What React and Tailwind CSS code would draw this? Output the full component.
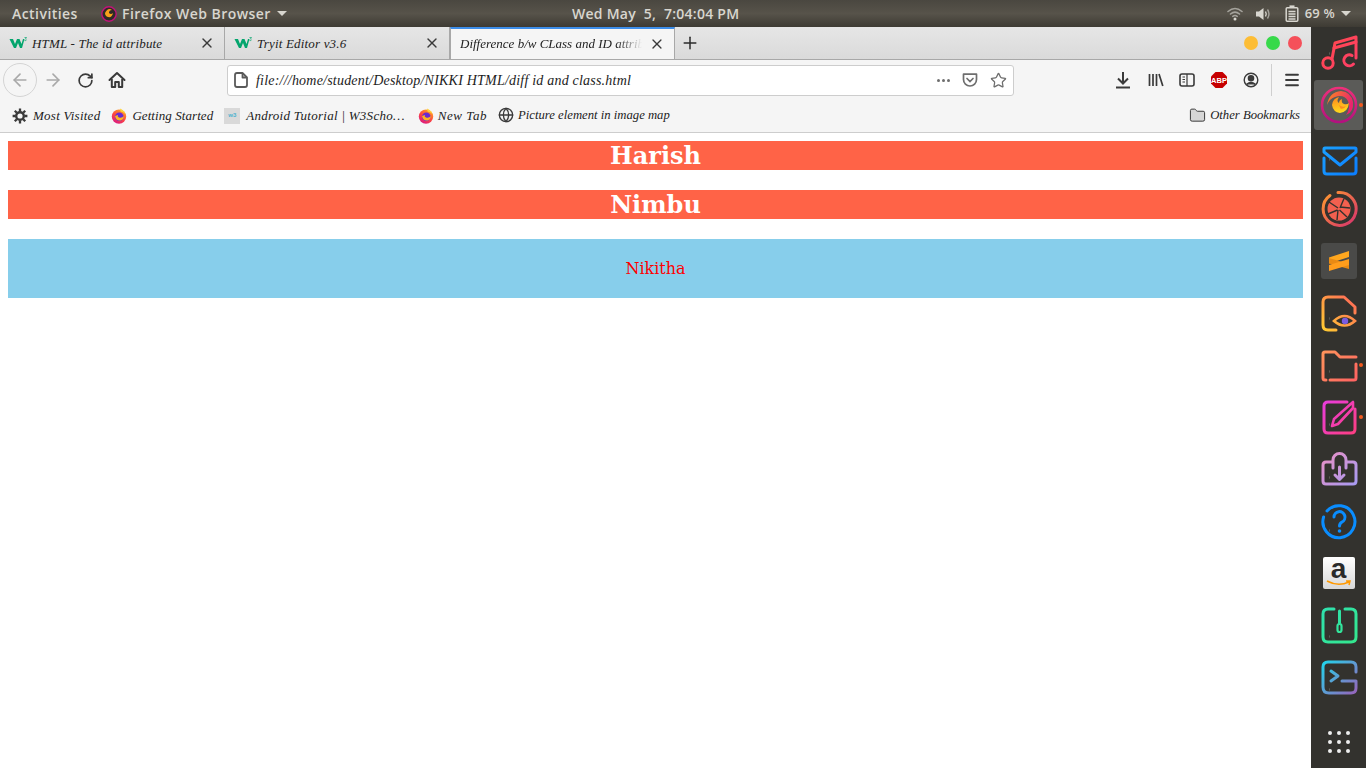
import { ArrowLeft, ArrowRight, Folder, Globe, Menu, Plus, RotateCw, Star, X } from "lucide-react";

const CHROME_FONT = "font-['Liberation_Serif',serif] italic";

function Caret() {
  return <span className="ml-[6px] h-0 w-0 border-x-[5px] border-t-[5px] border-x-transparent border-t-[#d8d6cf]" />;
}

function W3Logo() {
  return (
    <svg width="18" height="12" viewBox="0 0 18 12" className="shrink-0">
      <path d="M0.5 2 H4 L6 7 L8 2 H10.5 L12.5 7 L14 2 H15.5 L13 11 H11 L9 6 L7 11 H5 Z" fill="#04a56d" />
      <path d="M15.5 0.5 H17.5 L16.5 2 Q17.8 2.5 16.8 3.6 H15.5" fill="none" stroke="#04a56d" strokeWidth="0.7" />
    </svg>
  );
}

function FirefoxFavicon() {
  return (
    <svg width="16" height="16" viewBox="0 0 16 16" className="shrink-0">
      <defs>
        <linearGradient id="ffOuter" x1="0.8" y1="0" x2="0.2" y2="1">
          <stop offset="0" stopColor="#ffb020" />
          <stop offset="0.5" stopColor="#ff4a3d" />
          <stop offset="1" stopColor="#d6148a" />
        </linearGradient>
      </defs>
      <circle cx="8" cy="8.6" r="7.2" fill="url(#ffOuter)" />
      <circle cx="8.3" cy="8.8" r="4.3" fill="#6a2bd0" />
      <path d="M4 8 Q5 13 9.5 12.5 Q13 11.5 12.8 8 Q11 10.5 8 9.5 Q6 8.5 7 7 Z" fill="#ffb31f" />
      <path d="M9 0.5 Q13 2 14.5 6 Q12 3.5 9.5 3.5 Z" fill="#ffd53a" />
    </svg>
  );
}

function Tab({ title, active, fade, tracking }) {
  if (active) {
    return (
      <div className="flex h-full w-[225px] items-center border-x border-[#a8a8a8] border-t-2 border-t-[#3d8eea] bg-[#f5f5f5] pl-[9px] pr-[9px]">
        <span className={`w-[187px] overflow-hidden whitespace-nowrap text-[13px] text-[#222] ${CHROME_FONT} ${fade}`}>{title}</span>
        <X size={16} strokeWidth={2} className="ml-[3px] text-[#3a3a3a]" />
      </div>
    );
  }
  return (
    <div className="flex h-full w-[225px] items-center border-r border-[#a8a8a8] pl-[9px] pr-[9px]">
      <W3Logo />
      <span className={`ml-[5px] flex-1 whitespace-nowrap pt-px text-[13px] text-[#222] ${CHROME_FONT} ${tracking}`}>{title}</span>
      <X size={16} strokeWidth={2} className="text-[#3a3a3a]" />
    </div>
  );
}

function TopBar() {
  return (
    <div className="flex h-[27px] shrink-0 items-center bg-gradient-to-b from-[#4a4740] via-[#57534a] to-[#3e3b34] font-['Open_Sans',sans-serif] text-[14px] font-semibold text-[#d8d6cf]">
      <div className="flex w-[572px] items-center pl-[12px] tracking-[0.45px]">
        <span className="w-[88px]">Activities</span>
        <svg width="18" height="18" viewBox="0 0 18 18">
          <circle cx="9" cy="9" r="7.2" fill="#2e2b28" stroke="#c2127a" strokeWidth="1.4" />
          <path d="M5 8 Q8 2 12 5 Q9 5 9 8 Q11 10 13 8 Q12 13 8 12 Q5 11 5 8Z" fill="#f9a01b" />
        </svg>
        <span className="ml-[4px]">Firefox Web Browser</span>
        <Caret />
      </div>
      <span className="whitespace-pre tracking-[0.26px]">Wed May  5,  7:04:04 PM</span>
      <div className="ml-auto flex items-center pr-[15px]">
        <svg width="16" height="14" viewBox="0 0 16 14" fill="none" stroke="#a5a39c" strokeWidth="1.6" strokeLinecap="round">
          <path d="M1 4.5 Q8 -1.5 15 4.5" />
          <path d="M3.5 7 Q8 3.2 12.5 7" />
          <path d="M5.8 9.3 Q8 7.6 10.2 9.3" />
          <circle cx="8" cy="12" r="1.5" fill="#d8d6cf" stroke="none" />
        </svg>
        <svg width="16" height="14" viewBox="0 0 16 14" className="ml-[12px]" fill="none">
          <path d="M1 4.5 H4 L8.5 1 V13 L4 9.5 H1 Z" fill="#d8d6cf" />
          <path d="M10.5 4.5 Q12 7 10.5 9.5" stroke="#d8d6cf" strokeWidth="1.4" />
          <path d="M12.5 2.5 Q15.5 7 12.5 11.5" stroke="#a5a39c" strokeWidth="1.4" />
        </svg>
        <svg width="14" height="17" viewBox="0 0 14 17" className="ml-[14px]" fill="none" stroke="#d8d6cf" strokeWidth="1.5">
          <rect x="1.2" y="2.8" width="11.6" height="13.4" rx="1" />
          <rect x="4.5" y="0.4" width="5" height="2.4" fill="#d8d6cf" stroke="none" />
          <path d="M3.5 6.5h7M3.5 9h7M3.5 11.5h7M3.5 14h7" />
        </svg>
        <span className="ml-[6px] text-[13px] tracking-[0.2px]">69 %</span>
        <Caret />
      </div>
    </div>
  );
}

function TabStrip() {
  return (
    <div className="flex h-[33px] shrink-0 items-stretch border-b border-[#a8a8a8] bg-gradient-to-b from-[#e6e6e6] to-[#dadada]">
      <Tab title="HTML - The id attribute" tracking="tracking-[0.18px]" />
      <Tab title="Tryit Editor v3.6" tracking="tracking-[0.18px]" />
      <Tab
        active
        title="Difference b/w CLass and ID attribute"
        fade="[mask-image:linear-gradient(to_right,black_84%,transparent_98%)]"
      />
      <div className="flex w-[30px] items-center justify-center">
        <Plus size={20} strokeWidth={1.8} className="text-[#2b2b2b]" />
      </div>
      <div className="ml-auto flex items-center gap-[8px] pr-[9px]">
        <span className="h-[14px] w-[14px] rounded-full bg-[#fdbd35]" />
        <span className="h-[14px] w-[14px] rounded-full bg-[#37d94a]" />
        <span className="h-[14px] w-[14px] rounded-full bg-[#f5505a]" />
      </div>
    </div>
  );
}

function NavBar() {
  return (
    <div className="flex h-[40px] shrink-0 items-center bg-[#f5f5f5] text-[#3a3a3a]">
      <div className="ml-[3px] flex h-[34px] w-[34px] items-center justify-center rounded-full border border-[#d4d4d4]">
        <ArrowLeft size={20} strokeWidth={2} className="text-[#a9a9a9]" />
      </div>
      <ArrowRight size={20} strokeWidth={2} className="ml-[6px] text-[#a9a9a9]" />
      <RotateCw size={17} strokeWidth={2.4} className="ml-[14px]" />
      <svg width="18" height="18" viewBox="0 0 18 18" className="ml-[14px]" fill="none" stroke="#3a3a3a" strokeWidth="2" strokeLinejoin="round">
        <path d="M1.5 9 L9 2 L16.5 9" strokeLinecap="round" />
        <path d="M3.8 8 V16 H7.2 V11 H10.8 V16 H14.2 V8" />
      </svg>
      <div className="ml-[101px] flex h-[31px] w-[787px] items-center rounded-[3px] border border-[#cdcdcd] bg-white pl-[5px] pr-[6px]">
        <svg width="14" height="16" viewBox="0 0 14 16" className="ml-px" fill="none" stroke="#5a5a5a" strokeWidth="1.8" strokeLinejoin="round">
          <path d="M3 1 H8.5 L13 5.5 V13 Q13 15 11 15 H3 Q1 15 1 13 V3 Q1 1 3 1 Z" />
          <path d="M8.5 1 V5.5 H13" />
        </svg>
        <span className={`ml-[8px] pt-px text-[14px] tracking-[0.21px] text-[#1c1c1c] ${CHROME_FONT}`}>
          file:///home/student/Desktop/NIKKI HTML/diff id and class.html
        </span>
        <div className="ml-auto flex items-center text-[#6e6e6e]">
          <span className="flex gap-[2px]">
            <i className="h-[3px] w-[3px] rounded-full bg-[#6e6e6e]" />
            <i className="h-[3px] w-[3px] rounded-full bg-[#6e6e6e]" />
            <i className="h-[3px] w-[3px] rounded-full bg-[#6e6e6e]" />
          </span>
          <svg width="16" height="16" viewBox="0 0 16 16" className="ml-[12px]" fill="none" stroke="#6e6e6e" strokeWidth="1.7">
            <path d="M1.5 2.2 H14.5 V7.5 A6.5 6.5 0 0 1 1.5 7.5 Z" strokeLinejoin="round" />
            <path d="M5 6.5 L8 9.5 L11 6.5" strokeLinecap="round" />
          </svg>
          <Star size={17} strokeWidth={1.8} className="ml-[12px]" />
        </div>
      </div>
      <svg width="16" height="18" viewBox="0 0 16 18" className="ml-[101px]" fill="none" stroke="#3a3a3a" strokeWidth="2">
        <path d="M8 1 V12 M3 7.5 L8 12.5 L13 7.5" />
        <path d="M1 16.5 H15" />
      </svg>
      <svg width="16" height="16" viewBox="0 0 16 16" className="ml-[17px]" fill="none" stroke="#3a3a3a" strokeWidth="1.7">
        <path d="M1.5 2v12M5 2v12M8.5 2v12M11 2l3.8 12" />
      </svg>
      <svg width="16" height="16" viewBox="0 0 16 16" className="ml-[15px]" fill="none" stroke="#3a3a3a" strokeWidth="1.6">
        <rect x="1" y="2" width="14" height="12" rx="2" />
        <path d="M8 2v12M3.5 5h2.5M3.5 7.5h2.5M3.5 10h2.5" strokeWidth="1.2" />
      </svg>
      <svg width="18" height="18" viewBox="0 0 18 18" className="ml-[15px]">
        <path d="M5.5 1 H12.5 L17 5.5 V12.5 L12.5 17 H5.5 L1 12.5 V5.5 Z" fill="#c60000" />
        <text x="9" y="11.5" textAnchor="middle" fontSize="7.5" fontWeight="700" fill="#fff" fontFamily="Liberation Sans, sans-serif">ABP</text>
      </svg>
      <svg width="16" height="16" viewBox="0 0 16 16" className="ml-[15px]" fill="none" stroke="#3a3a3a" strokeWidth="1.4">
        <circle cx="8" cy="8" r="6.8" />
        <circle cx="8" cy="6.3" r="2.6" fill="#3a3a3a" />
        <path d="M3.6 12.4 Q8 8.6 12.4 12.4" fill="#3a3a3a" />
      </svg>
      <span className="ml-[12px] h-[32px] w-px bg-[#cfcfcf]" />
      <Menu size={18} strokeWidth={2.4} className="ml-[11px]" />
    </div>
  );
}

function Bookmark({ icon, label, className, labelClass }) {
  return (
    <div className={`flex items-center ${className}`}>
      {icon}
      <span className={`whitespace-nowrap pt-px text-[#222] ${CHROME_FONT} ${labelClass}`}>{label}</span>
    </div>
  );
}

function GearIcon() {
  return (
    <svg width="16" height="16" viewBox="0 0 16 16" className="shrink-0" fill="none" stroke="#3a3a3a">
      <circle cx="8" cy="8" r="3.8" strokeWidth="2.4" />
      <path d="M8 0.6 V3.5 M8 12.5 V15.4 M0.6 8 H3.5 M12.5 8 H15.4 M2.8 2.8 L4.8 4.8 M11.2 11.2 L13.2 13.2 M13.2 2.8 L11.2 4.8 M4.8 11.2 L2.8 13.2" strokeWidth="2.3" />
    </svg>
  );
}

function BookmarksBar() {
  return (
    <div className="flex h-[33px] shrink-0 items-center border-b border-[#cdcdcd] bg-[#f5f5f5] pb-px pr-[11px]">
      <Bookmark
        className="ml-[12px]"
        icon={<GearIcon />}
        label="Most Visited"
        labelClass="ml-[5px] text-[13px] tracking-[0.25px]"
      />
      <Bookmark
        className="ml-[11px]"
        icon={<FirefoxFavicon />}
        label="Getting Started"
        labelClass="ml-[5px] text-[13px] tracking-[0.07px]"
      />
      <Bookmark
        className="ml-[11px]"
        icon={
          <span className="flex h-[16px] w-[16px] items-center justify-center bg-[#d9d9d9] font-['Liberation_Sans',sans-serif] text-[6px] font-bold text-[#4db2cf]">
            w3
          </span>
        }
        label="Android Tutorial | W3Scho…"
        labelClass="ml-[6px] text-[13px] tracking-[0.27px]"
      />
      <Bookmark
        className="ml-[13px]"
        icon={<FirefoxFavicon />}
        label="New Tab"
        labelClass="ml-[4px] text-[13px] tracking-[0.55px]"
      />
      <Bookmark
        className="ml-[11px]"
        icon={<Globe size={16} strokeWidth={2} className="shrink-0 text-[#3a3a3a]" />}
        label="Picture element in image map"
        labelClass="ml-[4px] text-[12.7px]"
      />
      <Bookmark
        className="ml-auto"
        icon={<Folder size={17} strokeWidth={1.4} fill="#d6d6d6" className="shrink-0 text-[#3a3a3a]" />}
        label="Other Bookmarks"
        labelClass="ml-[4px] text-[12.7px]"
      />
    </div>
  );
}

function Page() {
  return (
    <div className="min-h-0 flex-1 bg-white px-[8px] pt-[8px] font-['DejaVu_Serif',serif]">
      <h2 className="h-[29px] bg-[#ff6347] text-center text-[24px] font-bold leading-[29px] text-white">Harish</h2>
      <h2 className="mt-[20px] h-[29px] bg-[#ff6347] text-center text-[24px] font-bold leading-[29px] text-white">Nimbu</h2>
      <p className="mt-[20px] h-[59px] bg-[#87ceeb] text-center text-[16px] leading-[59px] text-[#f00]">Nikitha</p>
    </div>
  );
}

// each line icon is drawn on a 38x38 box, one unit per pixel
const DOCK_ICONS = [
  {
    id: "music",
    stops: ["#ff4a4a", "#ff3d6a"],
    paths: ["M12 25 L15 9 L36 3 V24", "M14 14 L36 8", "M33.5 30 A5.5 5.5 0 1 1 32 21.5"],
    extra: <circle cx="8" cy="29" r="5.2" fill="none" stroke="url(#music)" strokeWidth="3" />,
  },
  {
    id: "firefox",
    active: true,
    dot: true,
    custom: (
      <svg width="38" height="38" viewBox="0 0 38 38">
        <defs>
          <linearGradient id="fireRing" x1="0.5" y1="0" x2="0.5" y2="1">
            <stop offset="0" stopColor="#ef2f7a" />
            <stop offset="1" stopColor="#b3107f" />
          </linearGradient>
          <linearGradient id="fireSwirl" x1="0" y1="0" x2="1" y2="0.4">
            <stop offset="0" stopColor="#ff8a1e" />
            <stop offset="1" stopColor="#e8236e" />
          </linearGradient>
          <linearGradient id="fireCore" x1="0.4" y1="0" x2="0.6" y2="1">
            <stop offset="0" stopColor="#ff8a1e" />
            <stop offset="1" stopColor="#ffe01c" />
          </linearGradient>
        </defs>
        <circle cx="19" cy="19" r="17" fill="none" stroke="url(#fireRing)" strokeWidth="2.6" />
        <path d="M7 19 Q9 6 21 5 Q31 6 33 16 Q34 26 26 29 Q31 22 28 15 Q24 8 15 11 Q9 13 7 19Z" fill="url(#fireSwirl)" />
        <path d="M12 19 Q13 12 19 11 Q16 15 19 17 Q19 14 22 13 Q21 17 24 18 Q27 19 29 17 Q28 26 20 27 Q13 26 12 19Z" fill="url(#fireCore)" />
        <path d="M19 19 Q23 22 26 20 Q24 23.5 20.5 22.5Z" fill="#ff8a1e" />
      </svg>
    ),
  },
  {
    id: "mail",
    stops: ["#1ea8ff", "#0a7bff"],
    paths: ["M4 14 V11 Q4 10 5 10 H35 Q36 10 36 11 V14 L20 27 Z", "M4 20 V33 Q4 36 7 36 H33 Q36 36 36 33 V20"],
  },
  {
    id: "aperture",
    custom: (
      <svg width="38" height="38" viewBox="0 0 38 38">
        <defs>
          <linearGradient id="apRing" x1="0" y1="0" x2="1" y2="1">
            <stop offset="0" stopColor="#ff9a2e" />
            <stop offset="1" stopColor="#d6326e" />
          </linearGradient>
        </defs>
        <path d="M10 5.5 A16.5 16.5 0 1 0 18 2.5" fill="none" stroke="url(#apRing)" strokeWidth="3" strokeLinecap="round" />
        <circle cx="19" cy="19" r="11.5" fill="#f2604f" />
        <path d="M24 8.5 L20 18 M30 18 L20 17 M27 27 L19.5 20 M17 30 L18 20 M8 24 L17.5 20 M9 12 L18 18" stroke="#33322e" strokeWidth="1.4" />
      </svg>
    ),
  },
  {
    id: "sublime",
    custom: (
      <div className="flex h-[36px] w-[36px] items-center justify-center rounded-[3px] bg-[#4a4a48]">
        <svg width="24" height="24" viewBox="0 0 24 24">
          <path d="M2 8.5 L22 2 V8 L2 14.5 Z" fill="#ffa71e" />
          <path d="M2 9 L22 15 V20 L2 14.5 Z" fill="#e88a14" />
          <path d="M2 16 L22 10 V16 L2 22 Z" fill="#ff9d1c" />
        </svg>
      </div>
    ),
  },
  {
    id: "docview",
    flip: true,
    stops: ["#ffd22e", "#ff5d5d"],
    paths: ["M16 36 H8 Q3 36 3 31 V8 Q3 3 8 3 H24 L35 13 V19"],
    extra: (
      <>
        <path d="M14 27 Q24.5 17 35 27 Q24.5 36 14 27Z" fill="none" stroke="url(#docview)" strokeWidth="2.6" />
        <circle cx="25" cy="27" r="3.2" fill="#7a5ce0" />
      </>
    ),
  },
  {
    id: "folder",
    dot: true,
    stops: ["#ff9a5a", "#ff5f62"],
    paths: ["M6 34 H5 Q3 34 3 32 V8 Q3 6 5 6 H15 L20 11 H36", "M36 18 V32 Q36 34 34 34 H10"],
  },
  {
    id: "edit",
    dot: true,
    stops: ["#e63ce6", "#ff3f7a"],
    paths: ["M27 4 H8 Q4 4 4 8 V31 Q4 35 8 35 H31 Q35 35 35 31 V11"],
    extra: <path d="M12 28 L14 21 L33 4 V10 L18 26 Z" fill="none" stroke="url(#edit)" strokeWidth="2.6" strokeLinejoin="round" />,
  },
  {
    id: "store",
    stops: ["#f08fc0", "#a29bf5"],
    paths: [
      "M12 12 H6 Q3 12 3 15 V31 Q3 34 6 34 H33 Q36 34 36 31 V15 Q36 12 33 12 H27",
      "M13 18 V10 A6.5 6.5 0 0 1 26 10 V18",
      "M19.5 17 V29 M15 25 L19.5 29.5 L24 25",
    ],
  },
  {
    id: "help",
    custom: (
      <svg width="38" height="38" viewBox="0 0 38 38" fill="none">
        <path d="M7 9 A16 16 0 1 1 3.6 15" stroke="#0a8dff" strokeWidth="3" strokeLinecap="round" />
        <path d="M14 15 A5.5 5.5 0 1 1 22 20 Q19.5 21.5 19.5 24" stroke="#0a8dff" strokeWidth="3" strokeLinecap="round" />
        <circle cx="19.5" cy="29" r="1.8" fill="#0a8dff" />
      </svg>
    ),
  },
  {
    id: "amazon",
    custom: (
      <div className="flex h-[32px] w-[32px] flex-col items-center overflow-hidden rounded-[2px] bg-gradient-to-b from-white to-[#d8d8d8]">
        <span className="font-['Liberation_Sans',sans-serif] text-[28px] font-bold leading-[24px] text-[#2a2a2a]">a</span>
        <svg width="26" height="7" viewBox="0 0 26 7" className="-mt-[1px]">
          <path d="M1 1 Q12 7 23 2 M20 1 L24 1 L23 5" fill="none" stroke="#f90" strokeWidth="1.5" />
        </svg>
      </div>
    ),
  },
  {
    id: "mouse",
    stops: ["#2fe0b0", "#34e88c"],
    paths: ["M14 3 H8 Q3 3 3 8 V31 Q3 36 8 36 H31 Q36 36 36 31 V8 Q36 3 31 3 H25", "M19.5 5 V17"],
    extra: <rect x="17.5" y="18" width="4" height="8" rx="2" fill="none" stroke="url(#mouse)" strokeWidth="2.2" />,
  },
  {
    id: "terminal",
    stops: ["#15e0f0", "#a05cb8"],
    paths: ["M36 14 V9 Q36 4 31 4 H8 Q3 4 3 9 V29 Q3 35 9 35 H31 Q36 35 36 30 V23 H22", "M11 13 L18 18 L11 23"],
  },
];

function DockIcon({ icon }) {
  const content =
    icon.custom || (
      <svg width="38" height="38" viewBox="0 0 38 38" fill="none">
        <defs>
          {/* user space units: a straight line has no bounding box to paint on */}
          <linearGradient
            id={icon.id}
            x1="0"
            y1={icon.flip ? "38" : "0"}
            x2="38"
            y2={icon.flip ? "0" : "38"}
            gradientUnits="userSpaceOnUse"
          >
            <stop offset="0" stopColor={icon.stops[0]} />
            <stop offset="1" stopColor={icon.stops[1]} />
          </linearGradient>
        </defs>
        {icon.paths.map((d, i) => (
          <path
            key={i}
            d={d}
            stroke={`url(#${icon.id})`}
            strokeWidth="3"
            strokeLinecap="round"
            strokeLinejoin="round"
          />
        ))}
        {icon.extra}
      </svg>
    );

  return (
    <div className="relative flex h-[52px] w-full items-center justify-center">
      {icon.active && <span className="absolute inset-x-[3px] inset-y-px rounded-[3px] bg-[#5b5b58]" />}
      <span className="relative flex items-center justify-center">{content}</span>
      {icon.dot && <span className="absolute right-[3px] top-1/2 h-[4px] w-[4px] -translate-y-1/2 rounded-full bg-[#f25a1f]" />}
    </div>
  );
}

function Dock() {
  return (
    <div className="flex w-[55px] shrink-0 flex-col items-center bg-[#33322e] bg-[radial-gradient(#5a5954_0.5px,transparent_1px)] bg-[size:37px_53px]">
      {DOCK_ICONS.map((icon) => (
        <DockIcon key={icon.id} icon={icon} />
      ))}
      <div className="mt-auto mb-[15px] grid grid-cols-3 gap-x-[5px] gap-y-[5px]">
        {Array.from({ length: 9 }).map((_, i) => (
          <span key={i} className="h-[4px] w-[4px] rounded-full bg-[#eeeeee]" />
        ))}
      </div>
    </div>
  );
}

export default function App() {
  return (
    <div className="flex h-[768px] w-[1366px] flex-col overflow-hidden">
      <TopBar />
      <div className="flex min-h-0 flex-1">
        <div className="flex min-w-0 flex-1 flex-col">
          <TabStrip />
          <NavBar />
          <BookmarksBar />
          <Page />
        </div>
        <Dock />
      </div>
    </div>
  );
}
